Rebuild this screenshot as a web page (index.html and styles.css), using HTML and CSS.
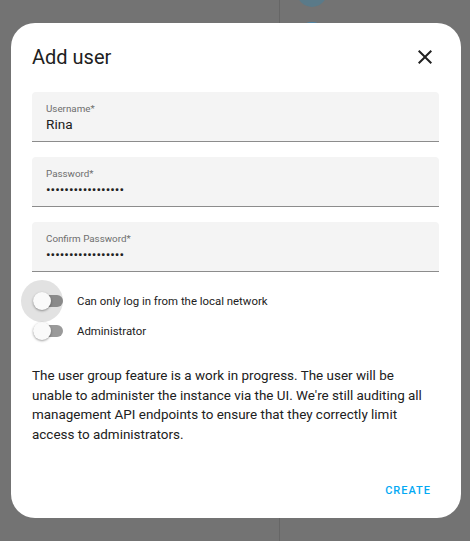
FILE: index.html
```html
<!DOCTYPE html>
<html lang="en">
<head>
<meta charset="utf-8">
<title>Add user</title>
<link rel="stylesheet" href="styles.css">
</head>
<body>
<div class="page">
  <div class="pane-left"></div>
  <div class="pane-right">
    <div class="avatar avatar-a"></div>
    <div class="avatar avatar-b"></div>
  </div>
</div>
<div class="scrim">
  <div class="dialog">
    <div class="header">
      <h2 class="title">Add user</h2>
      <svg class="close" viewBox="0 0 24 24" width="24" height="24"><path d="M19,6.41L17.59,5L12,10.59L6.41,5L5,6.41L10.59,12L5,17.59L6.41,19L12,13.41L17.59,19L19,17.59L13.41,12L19,6.41Z" fill="#212121"/></svg>
    </div>
    <div class="fields">
      <div class="field">
        <span class="label">Username*</span>
        <span class="value">Rina</span>
      </div>
      <div class="field">
        <span class="label">Password*</span>
        <span class="value">•••••••••••••••••</span>
      </div>
      <div class="field">
        <span class="label">Confirm Password*</span>
        <span class="value">•••••••••••••••••</span>
      </div>
    </div>
    <div class="toggles">
      <div class="toggle-row">
        <div class="switch"><span class="ripple"></span><span class="track"></span><span class="thumb"></span></div>
        <span class="toggle-label">Can only log in from the local network</span>
      </div>
      <div class="toggle-row">
        <div class="switch"><span class="track"></span><span class="thumb"></span></div>
        <span class="toggle-label">Administrator</span>
      </div>
    </div>
    <p class="note">The user group feature is a work in progress. The user will be unable to administer the instance via the UI. We're still auditing all management API endpoints to ensure that they correctly limit access to administrators.</p>
    <div class="footer">
      <button class="create">CREATE</button>
    </div>
  </div>
</div>
</body>
</html>
```
FILE: styles.css
```css
html, body {
  margin: 0;
  padding: 0;
}
body {
  width: 470px;
  height: 541px;
  overflow: hidden;
  background: #737373;
  font-family: Roboto, "Noto Sans", sans-serif;
  position: relative;
}
.page {
  display: flex;
  height: 541px;
}
.pane-left {
  width: 279px;
  border-right: 1px solid #666666;
}
.pane-right {
  padding-left: 17px;
}
.avatar {
  width: 30px;
  height: 30px;
  border-radius: 50%;
}
.avatar-a {
  margin-top: -23px;
  background: #5a7a89;
}
.avatar-b {
  margin-top: 15px;
  background: #4d86a8;
}
.scrim {
  position: absolute;
  inset: 0;
  padding: 23px 0 0 11px;
}
.dialog {
  width: 450px;
  height: 495px;
  box-sizing: border-box;
  background: #ffffff;
  border-radius: 24px;
  padding: 22px 22px 12px 21px;
  display: flex;
  flex-direction: column;
}
.header {
  display: flex;
  align-items: center;
  justify-content: space-between;
  height: 24px;
}
.title {
  margin: 0;
  font-size: 20px;
  line-height: 24px;
  font-weight: 400;
  color: #212121;
}
.close {
  display: block;
  margin-right: 2px;
}
.fields {
  margin-top: 23px;
  display: flex;
  flex-direction: column;
  gap: 15px;
}
.field {
  height: 50px;
  box-sizing: border-box;
  background: #f4f4f4;
  border-radius: 4px 4px 0 0;
  border-bottom: 1px solid #8c8c8c;
  padding: 11px 14px 0;
  display: flex;
  flex-direction: column;
}
.label {
  font-size: 9.8px;
  line-height: 12px;
  color: #6e6e6e;
}
.value {
  font-size: 13.6px;
  line-height: 18px;
  color: #212121;
}
.toggles {
  margin-top: 14px;
  display: flex;
  flex-direction: column;
}
.toggle-row {
  height: 30px;
  display: flex;
  align-items: center;
}
.switch {
  position: relative;
  width: 30px;
  height: 12px;
  margin-left: 1px;
}
.track {
  position: relative;
  display: block;
  width: 30px;
  height: 12px;
  border-radius: 6px;
  background: #9a9a9a;
}
.ripple {
  position: absolute;
  left: -12px;
  top: -15px;
  width: 42px;
  height: 42px;
  border-radius: 50%;
  background: #e2e2e2;
}
.ripple + .track {
  background: #8a8a8a;
}
.thumb {
  position: absolute;
  left: -0.5px;
  top: -3px;
  width: 18px;
  height: 18px;
  border-radius: 50%;
  background: #fafafa;
  box-shadow: 0 1px 2px rgba(0,0,0,0.25), 0 1px 3px rgba(0,0,0,0.15);
}
.toggle-label {
  margin-left: 14px;
  font-size: 11.4px;
  line-height: 30px;
  color: #212121;
}
.note {
  margin: 20px 10px 0 0;
  font-size: 13.45px;
  line-height: 19.5px;
  color: #212121;
}
.footer {
  margin-top: auto;
  display: flex;
  justify-content: flex-end;
}
.create {
  border: none;
  background: none;
  padding: 0 8px 0 9px;
  height: 32px;
  font-family: Roboto, sans-serif;
  font-size: 11px;
  font-weight: 500;
  letter-spacing: 1px;
  color: #03a9f4;
}
```
